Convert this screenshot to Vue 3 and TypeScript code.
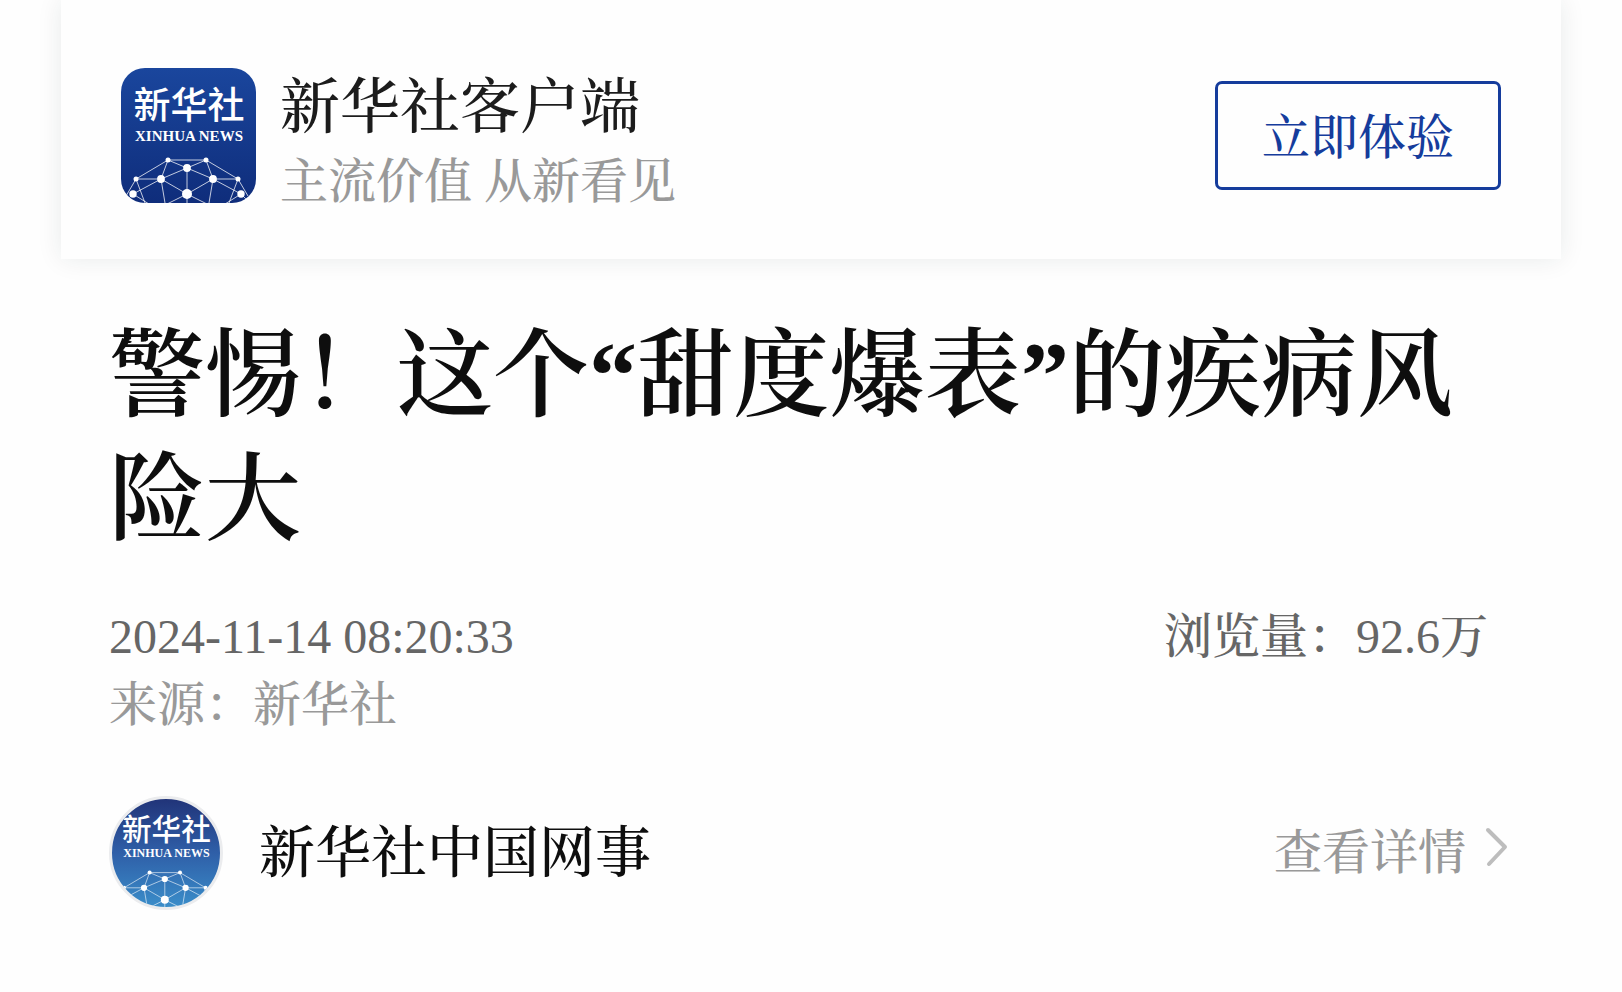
<script setup lang="ts">
import { h } from 'vue'

interface Point {
  x: number
  y: number
  r: number
}

const nodes: Point[] = [
  { x: 47, y: 92, r: 2.5 },
  { x: 85, y: 92, r: 2.5 },
  { x: 66, y: 100, r: 3.9 },
  { x: 15, y: 111, r: 2.5 },
  { x: 40, y: 111, r: 3.9 },
  { x: 92, y: 111, r: 3.9 },
  { x: 117, y: 111, r: 2.5 },
  { x: 12, y: 126, r: 3.7 },
  { x: 66, y: 126, r: 5 },
  { x: 120, y: 126, r: 3.7 },
]

const links =
  'M47 92H85M47 92L66 100L85 92M47 92L15 111H40L47 92M85 92L92 111H117L85 92M40 111L66 100L92 111' +
  'M66 100V135M40 111L66 126L92 111M40 111L12 126M92 111L120 126M40 111L44 135M92 111L88 135' +
  'M66 126L46 136M66 126L86 136M15 111L5 128M117 111L127 128M15 111L24 135M117 111L108 135' +
  'M12 126L28 136M120 126L104 136M12 126L6 132M120 126L126 132'

const BrandMark = () =>
  h('svg', { viewBox: '0 0 135 135', role: 'img', 'aria-label': '新华社 XINHUA NEWS' }, [
    h('text', { class: 'brand-cn', x: 68, y: 51, 'text-anchor': 'middle' }, '新华社'),
    h('text', { class: 'brand-en', x: 68, y: 73, 'text-anchor': 'middle' }, 'XINHUA NEWS'),
    h('path', { d: links, fill: 'none', stroke: '#fff', 'stroke-opacity': 0.75, 'stroke-width': 1 }),
    ...nodes.map((n) => h('circle', { cx: n.x, cy: n.y, r: n.r, fill: '#fff' })),
  ])

const article = {
  title: '警惕！这个“甜度爆表”的疾病风险大',
  time: '2024-11-14 08:20:33',
  views: '浏览量：92.6万',
  source: '来源：新华社',
  author: '新华社中国网事',
}
</script>

<template>
  <div class="page">
    <header class="banner">
      <BrandMark class="app-logo" />
      <div class="app-text">
        <div class="app-name">新华社客户端</div>
        <div class="app-slogan">主流价值 从新看见</div>
      </div>
      <button class="try" type="button">立即体验</button>
    </header>

    <main class="article">
      <h1 class="title">{{ article.title }}</h1>
      <div class="meta">
        <time>{{ article.time }}</time>
        <span>{{ article.views }}</span>
      </div>
      <div class="source">{{ article.source }}</div>
      <div class="author">
        <BrandMark class="avatar" />
        <span class="author-name">{{ article.author }}</span>
        <a class="more" href="#">
          查看详情
          <svg class="chevron" viewBox="0 0 24 52" aria-hidden="true">
            <path d="M4 3L21 20L5 37" fill="none" stroke="#bdbdbd" stroke-width="4" stroke-linecap="round" stroke-linejoin="round" />
          </svg>
        </a>
      </div>
    </main>
  </div>
</template>

<style>
body {
  margin: 0;
  background: #fefefe;
}
</style>

<style scoped>
.page {
  font-family: "Liberation Serif", "Noto Serif CJK SC", "Songti SC", "Noto Sans CJK SC", serif;
  font-size: 48px;
  font-weight: 500;
  line-height: 68px;
  color: #666;
}

.page :deep(.brand-cn) {
  font: 500 37px "Noto Sans CJK SC", sans-serif;
  fill: #fff;
}

.page :deep(.brand-en) {
  font: 700 15px "Liberation Serif", serif;
  fill: #fff;
}

.banner {
  display: flex;
  align-items: flex-start;
  margin: 0 61px;
  padding: 68px 60px 43px;
  background: #fefefe;
  box-shadow: 0 0 24px rgba(20, 40, 40, 0.09);
}

.app-logo {
  flex: none;
  width: 135px;
  height: 135px;
  border-radius: 24px;
  background: linear-gradient(#1a469d, #0f2d7b);
}

.app-text {
  flex: 1;
  margin-left: 24px;
}

.app-name {
  font-size: 60px;
  line-height: 80px;
  color: #1c1c1c;
}

.app-slogan {
  color: #999;
}

.try {
  box-sizing: border-box;
  height: 109px;
  margin-top: 13px;
  padding: 5px 44px 0;
  border: 3px solid #153c9c;
  border-radius: 7px;
  background: transparent;
  color: #153c9c;
  font: inherit;
}

.article {
  padding: 55px 114px 0 109px;
}

.title {
  margin: 0;
  font-size: 96px;
  font-weight: 600;
  line-height: 124px;
  color: #0e0e0e;
}

.meta {
  display: flex;
  justify-content: space-between;
  margin-top: 41px;
  padding-right: 20px;
}

.source {
  color: #999;
}

.author {
  display: flex;
  align-items: center;
  margin-top: 57px;
}

.avatar {
  flex: none;
  width: 108px;
  height: 108px;
  border: 3px solid #ebecee;
  border-radius: 50%;
  background: linear-gradient(#213479, #2f5fa8 50%, #3a8dc9);
}

.author-name {
  flex: 1;
  margin-left: 36px;
  font-size: 56px;
  color: #0e0e0e;
}

.more {
  display: flex;
  align-items: center;
  gap: 18px;
  color: #999;
  text-decoration: none;
}

.chevron {
  width: 24px;
  height: 52px;
}
</style>
